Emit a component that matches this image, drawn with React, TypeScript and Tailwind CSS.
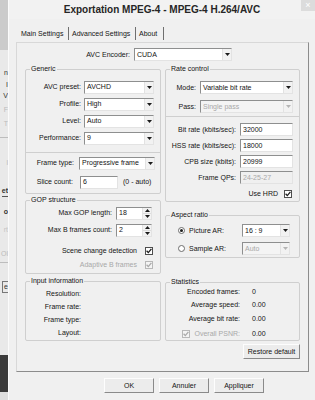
import React from "react";

const sunken =
  "border border-t-[#8e8f8f] border-l-[#8e8f8f] border-r-[#e3e3e3] border-b-[#e3e3e3]";
const raised =
  "border border-t-[#fdfdfd] border-l-[#fdfdfd] border-r-[#8a8a8a] border-b-[#8a8a8a] bg-[#ececec]";

function Arrow({ up = false, disabled = false }: { up?: boolean; disabled?: boolean }) {
  return (
    <svg width="5" height="3" viewBox="0 0 5 3">
      <path d={up ? "M0 3h5L2.5 0z" : "M0 0h5L2.5 3z"} fill={disabled ? "#b4b4b4" : "#1b1b1b"} />
    </svg>
  );
}

function Select({ value, w, disabled = false }: { value: string; w: string; disabled?: boolean }) {
  return (
    <div
      className={`flex h-[13px] shrink-0 items-center ${w} ${sunken} ${
        disabled ? "bg-[#f4f4f4] text-[#a8a8a8]" : "bg-white"
      }`}
    >
      <span className="flex-1 truncate pl-[2px]">{value}</span>
      <div className="flex h-[11px] w-[9px] items-center justify-center border-l border-[#e2e2e2] bg-[#f2f2f2]">
        <Arrow disabled={disabled} />
      </div>
    </div>
  );
}

function Field({ value, w, disabled = false }: { value: string; w: string; disabled?: boolean }) {
  return (
    <div
      className={`flex h-[13px] shrink-0 items-center pl-[2px] ${w} ${sunken} ${
        disabled ? "bg-[#f0f0f0] text-[#a8a8a8]" : "bg-white"
      }`}
    >
      {value}
    </div>
  );
}

function Spin({ value }: { value: string }) {
  return (
    <div className={`flex h-[13px] w-[36px] shrink-0 items-center bg-white ${sunken}`}>
      <span className="flex-1 pl-[2px]">{value}</span>
      <div className="flex h-[11px] w-[9px] flex-col border-l border-[#e2e2e2] bg-[#f2f2f2]">
        <div className="flex flex-1 items-center justify-center border-b border-[#dcdcdc]">
          <Arrow up />
        </div>
        <div className="flex flex-1 items-center justify-center">
          <Arrow />
        </div>
      </div>
    </div>
  );
}

function Check({ disabled = false }: { disabled?: boolean }) {
  return (
    <div
      className={`flex h-[8px] w-[8px] shrink-0 items-center justify-center border ${
        disabled ? "border-[#b8b8b8] bg-[#f4f4f4]" : "border-[#4e4e4e] bg-white"
      }`}
    >
      <svg width="6" height="6" viewBox="0 0 6 6">
        <path
          d="M0.6 2.8L2.3 4.6L5.4 0.8"
          fill="none"
          stroke={disabled ? "#a9a9a9" : "#1c1c1c"}
          strokeWidth="1.3"
        />
      </svg>
    </div>
  );
}

function Radio({ checked = false }: { checked?: boolean }) {
  return (
    <div className="flex h-[7px] w-[7px] shrink-0 items-center justify-center rounded-full border border-[#6d6d6d] bg-white">
      {checked && <div className="h-[3px] w-[3px] rounded-full bg-[#1c1c1c]" />}
    </div>
  );
}

function Group({
  title,
  className,
  children,
}: {
  title: string;
  className: string;
  children: React.ReactNode;
}) {
  return (
    <div className={`flex flex-col rounded-[2px] border border-[#cfcfcf] ${className}`}>
      <div className="-mt-[6px] ml-[4px] w-fit bg-[#f0f0f0] px-[1px] leading-[10px]">{title}</div>
      {children}
    </div>
  );
}

export default function App() {
  return (
    <div className="flex h-[400px] w-[315px] overflow-hidden bg-[#f0f0f0] font-['Liberation_Sans',Arial,sans-serif] text-[7px] leading-[10px] text-[#141414]">
      {/* bit of the window behind */}
      <div className="flex w-[8px] shrink-0 flex-col overflow-hidden">
        <div className="h-[50px] bg-[#cbcbcb]" />
        <div className="flex flex-1 flex-col items-end bg-[#e9e9e9] pt-[18px] text-[#333] whitespace-nowrap">
          <span>n</span>
          <span className="mt-[2px]">I</span>
          <span className="mt-[1px]">V</span>
          <span className="mt-[4px] text-[#bbb]">F</span>
          <span className="mt-[4px] text-[#bbb]">T</span>
          <div className="mt-[8px] h-px w-full bg-[#bdbdbd]" />
          <span className="mt-[20px] text-[#bbb]">l</span>
          <span className="mt-[18px] border-b border-[#555] font-bold">et</span>
          <span className="mt-[10px] font-bold">o</span>
          <span className="mt-[8px] text-[#c4c4c4]">rt</span>
          <span className="mt-[14px] text-[#bbb]">Ol</span>
          <div className="mt-[3px] h-px w-full bg-[#bdbdbd]" />
          <span className="mt-[18px] border-y border-l border-[#777] pl-[1px]">e</span>
          <div className="flex-1" />
          <div className="h-[37px] w-full bg-[#3b3b3b]" />
          <div className="h-[8px] w-full bg-[#dedede]" />
        </div>
      </div>

      {/* dialog */}
      <div className="flex flex-1 flex-col border-l border-[#fbfbfb]">
        <div className="grid h-[19px] shrink-0 grid-cols-[17px_1fr_17px] bg-[#f2f2f2]">
          <div />
          <div className="self-center text-center text-[10px] font-bold leading-[12px] text-[#262626]">
            Exportation MPEG-4 - MPEG-4 H.264/AVC
          </div>
          <div className="flex h-[11px] w-[14px] items-center justify-center justify-self-end bg-[#dcdcdc] text-[9px] leading-[9px] text-white">
            ×
          </div>
        </div>

        {/* tabs */}
        <div className="ml-[8px] mt-[6px] flex h-[17px] items-center">
          <div className="w-[51px] pl-[4px]">Main Settings</div>
          <div className="h-[13px] w-px bg-[#6f6f6f]" />
          <div className="w-[66px] pl-[3px]">Advanced Settings</div>
          <div className="h-[13px] w-px bg-[#6f6f6f]" />
          <div className="w-[27px] pl-[3px]">About</div>
          <div className="h-[13px] w-px bg-[#6f6f6f]" />
        </div>

        <div className="ml-[7px] flex h-[330px] w-[293px] flex-col border border-t-[#d8d8d8] border-l-[#d8d8d8] border-r-[#8c8c8c] border-b-[#8c8c8c] px-[8px] pt-[5px]">
          <div className="-ml-[8px] flex h-[13px] items-center">
            <span className="w-[113px] shrink-0 text-right">AVC Encoder:</span>
            <div className="ml-[4px]">
              <Select value="CUDA" w="w-[98px]" />
            </div>
          </div>

          <div className="mt-[8px] flex gap-[4px]">
            {/* left column */}
            <div className="flex w-[136px] flex-col">
              <Group title="Generic" className="h-[125px]">
                <div className="mt-[6px] flex flex-col gap-[3px]">
                  {[
                    ["AVC preset:", "AVCHD"],
                    ["Profile:", "High"],
                    ["Level:", "Auto"],
                    ["Performance:", "9"],
                  ].map(([l, v]) => (
                    <div key={l} className="flex h-[14px] items-center">
                      <span className="w-[55px] shrink-0 text-right">{l}</span>
                      <div className="ml-[3px]">
                        <Select value={v} w="w-[70px]" />
                      </div>
                    </div>
                  ))}
                </div>
                <div className="mt-[7px] h-px bg-[#cfcfcf]" />
                <div className="mt-[3px] flex h-[14px] items-center">
                  <span className="w-[48px] shrink-0 text-right">Frame type:</span>
                  <div className="ml-[5px]">
                    <Select value="Progressive frame" w="w-[76px]" />
                  </div>
                </div>
                <div className="mt-[5px] flex h-[14px] items-center">
                  <span className="w-[47px] shrink-0 text-right">Slice count:</span>
                  <div className="ml-[7px]">
                    <Field value="6" w="w-[38px]" />
                  </div>
                  <span className="ml-[5px]">(0 - auto)</span>
                </div>
              </Group>

              <Group title="GOP structure" className="mt-[6px] h-[74px]">
                <div className="mt-[1px] flex h-[14px] items-center">
                  <span className="w-[86px] shrink-0 text-right">Max GOP length:</span>
                  <div className="ml-[4px]">
                    <Spin value="18" />
                  </div>
                </div>
                <div className="mt-[3px] flex h-[14px] items-center">
                  <span className="w-[86px] shrink-0 text-right">Max B frames count:</span>
                  <div className="ml-[4px]">
                    <Spin value="2" />
                  </div>
                </div>
                <div className="mt-[7px] flex h-[14px] items-center">
                  <span className="w-[111px] shrink-0 text-right">Scene change detection</span>
                  <div className="ml-[8px]">
                    <Check />
                  </div>
                </div>
                <div className="flex h-[14px] items-center">
                  <span className="w-[111px] shrink-0 text-right text-[#a8a8a8]">Adaptive B frames</span>
                  <div className="ml-[8px]">
                    <Check disabled />
                  </div>
                </div>
              </Group>

              <Group title="Input information" className="mt-[7px] h-[60px]">
                <div className="mt-[1px] flex flex-col">
                  {["Resolution:", "Frame rate:", "Frame type:", "Layout:"].map((l) => (
                    <div key={l} className="flex h-[13px] items-center">
                      <span className="w-[55px] shrink-0 text-right">{l}</span>
                    </div>
                  ))}
                </div>
              </Group>
            </div>

            {/* right column */}
            <div className="flex w-[135px] flex-col">
              <Group title="Rate control" className="h-[133px]">
                <div className="mt-[7px] flex h-[13px] items-center">
                  <span className="w-[30px] shrink-0 text-right">Mode:</span>
                  <div className="ml-[4px]">
                    <Select value="Variable bit rate" w="w-[93px]" />
                  </div>
                </div>
                <div className="mt-[6px] flex h-[13px] items-center">
                  <span className="w-[30px] shrink-0 text-right">Pass:</span>
                  <div className="ml-[4px]">
                    <Select value="Single pass" w="w-[93px]" disabled />
                  </div>
                </div>
                <div className="mt-[3px] h-px bg-[#cfcfcf]" />
                <div className="mt-[6px] flex flex-col gap-[3px]">
                  {[
                    ["Bit rate (kbits/sec):", "32000", false],
                    ["HSS rate (kbits/sec):", "18000", false],
                    ["CPB size (kbits):", "20999", false],
                    ["Frame QPs:", "24-25-27", true],
                  ].map(([l, v, d]) => (
                    <div key={l as string} className="flex h-[13px] items-center">
                      <span className="w-[70px] shrink-0 text-right">{l}</span>
                      <div className="ml-[4px]">
                        <Field value={v as string} w="w-[53px]" disabled={d as boolean} />
                      </div>
                    </div>
                  ))}
                  <div className="flex h-[13px] items-center justify-end pr-[7px]">
                    <span>Use HRD</span>
                    <div className="ml-[6px]">
                      <Check />
                    </div>
                  </div>
                </div>
              </Group>

              <Group title="Aspect ratio" className="mt-[13px] h-[43px]">
                <div className="mt-[4px] flex h-[13px] items-center">
                  <div className="flex w-[76px] shrink-0 items-center pl-[12px]">
                    <Radio checked />
                    <span className="ml-[4px]">Picture AR:</span>
                  </div>
                  <Select value="16 : 9" w="w-[48px]" />
                </div>
                <div className="mt-[5px] flex h-[13px] items-center">
                  <div className="flex w-[76px] shrink-0 items-center pl-[12px]">
                    <Radio />
                    <span className="ml-[4px]">Sample AR:</span>
                  </div>
                  <Select value="Auto" w="w-[48px]" disabled />
                </div>
              </Group>

              <Group title="Statistics" className="mt-[24px] h-[59px]">
                <div className="-mt-[2px] flex h-[13px] items-center">
                  <span className="w-[74px] shrink-0 text-right">Encoded frames:</span>
                  <span className="ml-[12px]">0</span>
                </div>
                <div className="flex h-[13px] items-center">
                  <span className="w-[74px] shrink-0 text-right">Average speed:</span>
                  <span className="ml-[12px]">0.00</span>
                </div>
                <div className="mt-[1px] flex h-[13px] items-center">
                  <span className="w-[74px] shrink-0 text-right">Average bit rate:</span>
                  <span className="ml-[12px]">0.00</span>
                </div>
                <div className="mt-[2px] flex h-[13px] items-center">
                  <div className="flex w-[74px] shrink-0 items-center justify-end text-[#a8a8a8]">
                    <Check disabled />
                    <span className="ml-[4px]">Overall PSNR:</span>
                  </div>
                  <span className="ml-[12px]">0.00</span>
                </div>
              </Group>

              <button
                className={`mt-[3px] h-[15px] w-[57px] self-end text-[7px] leading-[10px] ${raised}`}
              >
                Restore default
              </button>
            </div>
          </div>
        </div>

        <div className="mt-[6px] flex justify-end gap-[5px] pr-[51px]">
          {["OK", "Annuler", "Appliquer"].map((b) => (
            <button key={b} className={`h-[15px] w-[50px] text-[7px] leading-[10px] ${raised}`}>
              {b}
            </button>
          ))}
        </div>
      </div>
    </div>
  );
}
